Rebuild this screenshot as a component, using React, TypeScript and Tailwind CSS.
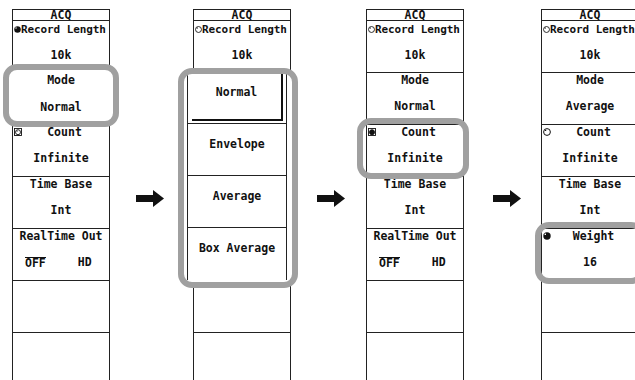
import React from "react";

const B = "font-['DejaVu_Sans_Mono',monospace] font-bold leading-[11px] text-[#111] whitespace-nowrap";
const F = `${B} text-[11.5px]`;

function DialFilled({ size = 7 }: { size?: number }) {
  return (
    <svg width={size} height={size} viewBox="0 0 8 8" className="shrink-0 block">
      <circle cx="4" cy="4" r="3.7" fill="#111" />
      <rect x="1.6" y="1.6" width="1.4" height="1.4" fill="#fff" />
    </svg>
  );
}
function DialOutline({ size = 7 }: { size?: number }) {
  return (
    <svg width={size} height={size} viewBox="0 0 8 8" className="shrink-0 block">
      <circle cx="4" cy="4" r="3.4" fill="none" stroke="#111" strokeWidth="1" />
      <rect x="2" y="1.8" width="1.2" height="1.2" fill="#111" />
    </svg>
  );
}
function BoxDial({ filled }: { filled?: boolean }) {
  return (
    <svg width="8" height="8" viewBox="0 0 8 8" className="shrink-0 block">
      <rect x="0.5" y="0.5" width="7" height="7" fill="none" stroke="#111" strokeWidth="0.9" />
      <circle cx="4" cy="4.2" r="2.5" fill={filled ? "#111" : "none"} stroke="#111" strokeWidth="0.9" />
      {!filled && <rect x="2.6" y="2.6" width="1" height="1" fill="#111" />}
    </svg>
  );
}

function Row({ icon, label, value }: { icon?: React.ReactNode; label?: string; value?: string }) {
  return (
    <div className="relative h-[52px] shrink-0 border-b border-[#222]">
      {icon && <div className="absolute left-[1px] top-[3px]">{icon}</div>}
      {label && <div className={`${F} mt-[2px] text-center ${icon ? "pl-[7px]" : ""}`}>{label}</div>}
      {value && <div className={`${F} mt-[15px] text-center`}>{value}</div>}
    </div>
  );
}

function RecordRow({ filled }: { filled?: boolean }) {
  return (
    <div className="relative h-[52px] shrink-0 border-b border-[#222] overflow-hidden">
      <div className="flex items-center mt-[3px] pl-[1px]">
        {filled ? <DialFilled /> : <DialOutline />}
        <span className={`${B} text-[11px] tracking-[-0.1px]`}>Record Length</span>
      </div>
      <div className={`${F} mt-[15px] text-center`}>10k</div>
    </div>
  );
}

function RealTimeRow() {
  return (
    <div className="relative h-[52px] shrink-0 border-b border-[#222]">
      <div className={`${F} mt-[2px] text-center`}>RealTime Out</div>
      <div className={`${F} mt-[15px] flex`}>
        <span className="ml-[12px] border-t border-[#111]">OFF</span>
        <span className="ml-[32px]">HD</span>
      </div>
    </div>
  );
}

function Panel({ children }: { children: React.ReactNode }) {
  return (
    <div className="w-[98px] shrink-0 h-[400px] border-x border-t border-[#222] flex flex-col overflow-hidden">
      <div className={`${F} h-[11px] border-b border-[#222] text-center leading-[10px]`}>ACQ</div>
      {children}
    </div>
  );
}

function Arrow() {
  return (
    <svg width="28" height="17" viewBox="0 0 28 17" className="shrink-0 block">
      <rect x="0" y="5" width="18" height="7" fill="#111" />
      <polygon points="17,0 28,8.5 17,17" fill="#111" />
    </svg>
  );
}

function Blank() {
  return <div className="h-[52px] shrink-0 border-b border-[#222]" />;
}

export default function App() {
  return (
    <div className="relative w-[635px] h-[380px] bg-white overflow-hidden">
      <div className="flex items-start pt-[9px]">
        {/* Panel 1 */}
        <div className="ml-[12px]">
          <Panel>
            <RecordRow filled />
            <Row label="Mode" value="Normal" />
            <Row icon={<BoxDial />} label="Count" value="Infinite" />
            <Row label="Time Base" value="Int" />
            <RealTimeRow />
            <Blank />
            <Blank />
          </Panel>
        </div>
        <div className="ml-[26px] mt-[181px]"><Arrow /></div>
        {/* Panel 2 */}
        <div className="ml-[29px]">
          <Panel>
            <RecordRow />
            <Blank />
            <Blank />
            <Blank />
            <Blank />
            <Blank />
            <Blank />
          </Panel>
        </div>
        <div className="ml-[26px] mt-[181px]"><Arrow /></div>
        {/* Panel 3 */}
        <div className="ml-[21px]">
          <Panel>
            <RecordRow />
            <Row label="Mode" value="Normal" />
            <Row icon={<BoxDial filled />} label="Count" value="Infinite" />
            <Row label="Time Base" value="Int" />
            <RealTimeRow />
            <Blank />
            <Blank />
          </Panel>
        </div>
        <div className="ml-[29px] mt-[181px]"><Arrow /></div>
        {/* Panel 4 */}
        <div className="ml-[20px]">
          <Panel>
            <RecordRow />
            <Row label="Mode" value="Average" />
            <Row icon={<DialOutline size={8} />} label="Count" value="Infinite" />
            <Row label="Time Base" value="Int" />
            <Row icon={<DialFilled size={8} />} label="Weight" value="16" />
            <Blank />
            <Blank />
          </Panel>
        </div>
      </div>

      {/* Highlight 1 (filled) */}
      <div className="absolute left-[3px] top-[64px] w-[116px] h-[63px] rounded-[14px] border-[6px] border-[#a0a0a0] bg-white">
        <div className={`${F} mt-[5px] text-center`}>Mode</div>
        <div className={`${F} mt-[16px] text-center`}>Normal</div>
      </div>

      {/* Popup list panel 2 */}
      <div className="absolute left-[178px] top-[68px] w-[120px] h-[220px] rounded-[14px] border-[6px] border-[#a0a0a0] bg-white overflow-hidden">
        <div className="ml-[3px] mr-[5px] mt-[-2px] border-x border-[#222] flex flex-col">
          <div className="h-[52px] border-b border-[#222] relative">
            <div className="absolute left-[4px] right-[3px] top-[0px] bottom-[2px] border-r-2 border-b-2 border-[#111]">
              <div className={`${F} mt-[15px] text-center`}>Normal</div>
            </div>
          </div>
          <div className="h-[52px] border-b border-[#222]">
            <div className={`${F} mt-[15px] text-center`}>Envelope</div>
          </div>
          <div className="h-[52px] border-b border-[#222]">
            <div className={`${F} mt-[15px] text-center`}>Average</div>
          </div>
          <div className="h-[52px]">
            <div className={`${F} mt-[15px] text-center`}>Box Average</div>
          </div>
        </div>
      </div>

      {/* Highlight 3 */}
      <div className="absolute left-[357px] top-[118px] w-[112px] h-[61px] rounded-[14px] border-[6px] border-[#a0a0a0]" />
      {/* Highlight 4 */}
      <div className="absolute left-[535px] top-[222px] w-[110px] h-[62px] rounded-[14px] border-[6px] border-[#a0a0a0]" />
    </div>
  );
}
